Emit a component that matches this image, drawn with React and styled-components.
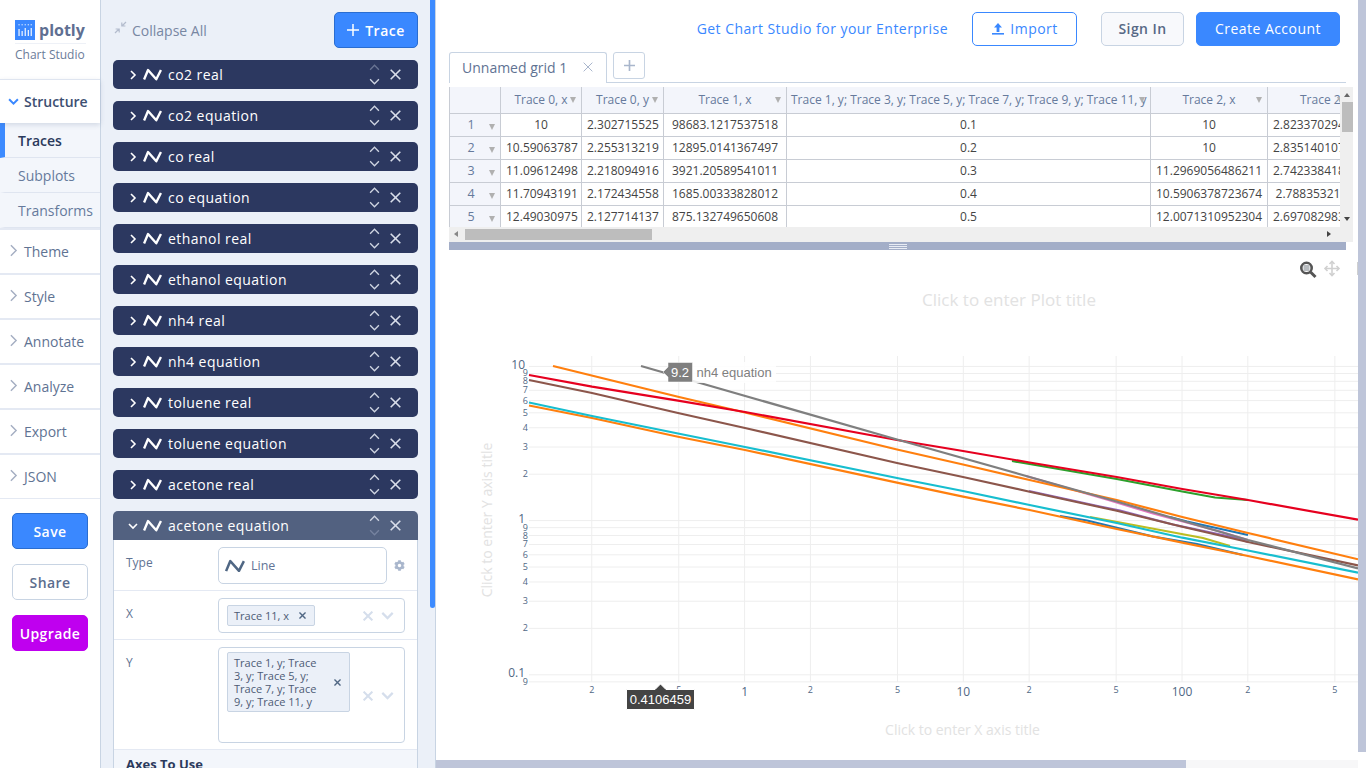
import React from 'react'
import styled, {createGlobalStyle} from 'styled-components'
import {FaCog} from 'react-icons/fa'

const GlobalStyle = createGlobalStyle`
  html, body { margin: 0; padding: 0; height: 100%; overflow: hidden; background: #fff; }
  body { font-family: "Open Sans", "Liberation Sans", sans-serif; color: #506784; }
  * { box-sizing: border-box; }
`

const Page = styled.div`
  display: flex;
  width: 1366px;
  height: 768px;
  overflow: hidden;
`

/* ---------- left nav ---------- */
const Nav = styled.nav`
  width: 101px;
  flex: none;
  background: #fff;
  border-right: 1px solid #c8d4e3;
  display: flex;
  flex-direction: column;
`
const Logo = styled.div`
  height: 79px;
  padding: 20px 14px 0 15px;
`
const LogoTop = styled.div`
  display: flex;
  align-items: center;
  gap: 4px;
  height: 24px;
  border-bottom: 1px solid #eef1f7;
  padding-bottom: 3px;
  font-size: 16px;
  font-weight: 700;
  color: #5f6f92;
`
const LogoSub = styled.div`
  font-size: 12px;
  color: #6b7c99;
  margin-top: 2px;
  white-space: nowrap;
`
const StructureRow = styled.div`
  height: 44px;
  border-top: 1px solid #dfe5f0;
  display: flex;
  align-items: center;
  padding-left: 8px;
  gap: 5px;
  font-size: 14px;
  font-weight: 600;
  color: #3d4f72;
  box-shadow: 0 2px 5px rgba(80, 100, 140, .2);
  position: relative;
  z-index: 1;
`
const SubItem = styled.div`
  height: 35px;
  background: #f3f6fb;
  border-bottom: 1px solid #dfe5f0;
  border-left: 5px solid ${p => (p.$active ? '#3d8bff' : 'transparent')};
  padding-left: 13px;
  display: flex;
  align-items: center;
  font-size: 14px;
  font-weight: ${p => (p.$active ? 600 : 400)};
  color: ${p => (p.$active ? '#2b3a5c' : '#667a9c')};
  white-space: nowrap;
  overflow: hidden;
`
const NavItem = styled.div`
  height: 45px;
  border-top: 2px solid #e4e9f3;
  padding-left: 7px;
  display: flex;
  align-items: center;
  gap: 4px;
  font-size: 14px;
  color: #5f7393;
`
const NavChevron = styled.span`
  display: flex;
  margin-bottom: 3px;
`
const NavEnd = styled.div`
  border-top: 1px solid #e4e9f3;
  padding: 14px 12px 0 12px;
  display: flex;
  flex-direction: column;
  gap: 15px;
`
const SideButton = styled.div`
  height: 36px;
  border-radius: 5px;
  display: flex;
  align-items: center;
  justify-content: center;
  font-size: 14px;
  font-weight: 600;
  letter-spacing: .4px;
  background: ${p => ({save: '#3a88ff', share: '#fff', upgrade: '#bf00ef'}[p.$kind])};
  color: ${p => (p.$kind === 'share' ? '#5b6d8e' : '#fff')};
  border: 1px solid ${p => ({save: '#2a6dd0', share: '#c8d4e3', upgrade: '#bf00ef'}[p.$kind])};
`

/* ---------- traces panel ---------- */
const Panel = styled.aside`
  width: 335px;
  flex: none;
  height: 768px;
  background: #ebf0f8;
  border-right: 1px solid #c8d4e3;
  padding: 12px 17px 0 12px;
  position: relative;
  overflow: hidden;
`
const PanelThumb = styled.div`
  position: absolute;
  top: -2px;
  right: 0;
  width: 5px;
  height: 610px;
  background: #3d8bff;
  border-radius: 3px;
`
const PanelHead = styled.div`
  display: flex;
  align-items: center;
  justify-content: space-between;
  height: 36px;
  margin-bottom: 12px;
`
const CollapseAll = styled.div`
  display: flex;
  align-items: center;
  gap: 5px;
  font-size: 14px;
  color: #7887a3;
  padding-left: 1px;
`
const CollapseSlot = styled.span`
  display: flex;
  margin-bottom: 6px;
`
const AddTrace = styled.div`
  width: 84px;
  height: 36px;
  border-radius: 5px;
  background: #3a88ff;
  border: 1px solid #2a6dd0;
  color: #fff;
  display: flex;
  align-items: center;
  justify-content: center;
  gap: 6px;
  font-size: 14px;
  font-weight: 600;
  letter-spacing: .5px;
`
const TraceRow = styled.div`
  height: 29px;
  margin-bottom: ${p => (p.$open ? 0 : '12px')};
  border-radius: ${p => (p.$open ? '5px 5px 0 0' : '5px')};
  background: ${p => (p.$open ? '#526180' : '#2c3860')};
  color: #fff;
  display: flex;
  align-items: center;
  gap: 5px;
  padding-left: 15px;
  font-size: 14px;
  font-weight: 500;
  letter-spacing: .45px;
`
const TraceName = styled.span`
  flex: 1;
  margin-left: 1px;
  white-space: nowrap;
`
const TraceTools = styled.div`
  display: flex;
  align-items: center;
  gap: 10px;
  padding-right: 17px;
`
const Stack = styled.div`
  display: flex;
  flex-direction: column;
  gap: 3px;
`
const Fold = styled.div`
  background: #fff;
  border: 1px solid #c8d4e3;
  border-top: none;
`
const FieldRow = styled.div`
  display: flex;
  border-bottom: 1px solid #e4e9f3;
  padding: 7px 12px 6px 12px;
`
const FieldLabel = styled.div`
  width: 92px;
  flex: none;
  font-size: 12px;
  color: #5f7393;
  padding-top: 7px;
`
const TypeBox = styled.div`
  width: 169px;
  flex: none;
  height: 37px;
  border: 1px solid #c8d4e3;
  border-radius: 5px;
  display: flex;
  align-items: center;
  gap: 6px;
  padding-left: 6px;
  font-size: 12.5px;
  color: #627496;
`
const GearSlot = styled.div`
  width: 18px;
  flex: none;
  display: flex;
  align-items: center;
  justify-content: flex-end;
  color: #a9b6cc;
  font-size: 11px;
`
const SelectBox = styled.div`
  width: 187px;
  flex: none;
  height: ${p => p.$h}px;
  border: 1px solid #c8d4e3;
  border-radius: 4px;
  padding: ${p => (p.$tall ? '4px 0 0 8px' : '0 0 0 8px')};
  display: flex;
  align-items: ${p => (p.$tall ? 'flex-start' : 'center')};
`
const Tag = styled.div`
  width: ${p => p.$w}px;
  display: flex;
  align-items: center;
  justify-content: space-between;
  background: #ebf0f8;
  border: 1px solid #c8d4e3;
  border-radius: 2px;
  padding: 3px 8px 3px 6px;
  font-size: 11px;
  line-height: 13px;
  color: #4d5b75;
  flex: none;
`
const TagText = styled.span`
  width: 92px;
`
const SelectTools = styled.div`
  margin-left: auto;
  display: flex;
  align-items: center;
  gap: 8px;
  padding-right: 10px;
  align-self: ${p => (p.$tall ? 'flex-start' : 'center')};
  margin-top: ${p => (p.$tall ? '37px' : 0)};
`
const SectionHead = styled.div`
  background: #f3f6fb;
  padding: 5px 12px 0;
  height: 40px;
  font-size: 13px;
  font-weight: 700;
  color: #2b3a5c;
`

/* ---------- main ---------- */
const Main = styled.main`
  position: relative;
  flex: 1;
  height: 768px;
  overflow: hidden;
  display: flex;
  flex-direction: column;
  background: #fff;
`
const TopBar = styled.header`
  height: 52px;
  flex: none;
  padding: 12px 26px 0 0;
  display: flex;
  align-items: flex-start;
  justify-content: flex-end;
`
const EnterpriseLink = styled.a`
  font-size: 14px;
  line-height: 34px;
  color: #3a88ff;
  letter-spacing: .46px;
  margin-right: 24px;
  white-space: nowrap;
`
const TopButton = styled.div`
  height: 34px;
  width: ${p => p.$w}px;
  margin-left: ${p => p.$ml}px;
  padding-bottom: 2px;
  border-radius: 5px;
  display: flex;
  align-items: center;
  justify-content: center;
  gap: 5px;
  font-size: 14px;
  letter-spacing: .45px;
  font-weight: ${p => (p.$kind === 'signin' ? 600 : 400)};
  background: ${p => ({import: '#fff', signin: '#f8f9fc', create: '#3a88ff'}[p.$kind])};
  color: ${p => ({import: '#3a88ff', signin: '#566885', create: '#fff'}[p.$kind])};
  border: 1px solid ${p => ({import: '#3a88ff', signin: '#c8d4e3', create: '#3a88ff'}[p.$kind])};
`
const TabRow = styled.div`
  margin-left: 13px;
  width: 897px;
  height: 31px;
  flex: none;
  border-bottom: 1px solid #c8d4e3;
  display: flex;
  gap: 6px;
  align-items: flex-start;
`
const GridTab = styled.div`
  width: 158px;
  height: 31px;
  background: #fff;
  border: 1px solid #c8d4e3;
  border-bottom: none;
  border-radius: 3px 3px 0 0;
  display: flex;
  align-items: center;
  justify-content: space-between;
  padding: 0 13px 2px 12px;
  font-size: 14px;
  color: #5f7393;
`
const AddTab = styled.div`
  width: 32px;
  height: 27px;
  border: 1px solid #c8d4e3;
  border-radius: 3px;
  display: flex;
  align-items: center;
  justify-content: center;
`
const GridBox = styled.div`
  margin: 4px 0 0 13px;
  width: 904px;
  height: 155px;
  flex: none;
  display: grid;
  grid-template-columns: 891px 13px;
  grid-template-rows: 140px 15px;
  background: #efefef;
`
const TableClip = styled.div`
  overflow: hidden;
  background: #fff;
`
const Table = styled.table`
  border-collapse: collapse;
  table-layout: fixed;
  width: 899px;
  font-size: 12px;
`
const Col = styled.col`
  width: ${p => p.$w}px;
`
const Th = styled.th`
  height: 26px;
  padding: 0 5px 0 ${p => p.$pl || 5}px;
  text-align: ${p => (p.$pl ? 'left' : 'center')};
  background: #f3f5fb;
  border: 1px solid #c8ccd4;
  border-top: none;
  color: #667a9c;
  font-weight: 400;
  white-space: nowrap;
  overflow: hidden;
  position: relative;
`
const SortMark = styled.span`
  position: absolute;
  right: 5px;
  top: ${p => p.$top}px;
  width: 0;
  height: 0;
  border-left: 3px solid transparent;
  border-right: 3px solid transparent;
  border-top: 6px solid #b0b0b0;
`
const RowHead = styled.td`
  height: 23px;
  padding: 0;
  background: #f3f5fb;
  border: 1px solid #c8ccd4;
  color: #667a9c;
  position: relative;
  font-size: 12.5px;
  text-align: left;
`
const RowNo = styled.span`
  display: inline-block;
  width: 42px;
  text-align: center;
`
const Td = styled.td`
  height: 23px;
  padding: 0 5px;
  border: 1px solid #c8ccd4;
  color: #444;
  text-align: center;
  white-space: nowrap;
  overflow: hidden;
`
const VTrack = styled.div`
  grid-row: 1 / 3;
  grid-column: 2;
  background: #efefef;
  position: relative;
`
const VThumb = styled.div`
  position: absolute;
  top: 15px;
  left: 2px;
  width: 11px;
  height: 30px;
  background: #bdbdbd;
`
const HTrack = styled.div`
  background: #efefef;
  position: relative;
`
const HThumb = styled.div`
  position: absolute;
  top: 2px;
  left: 16px;
  width: 187px;
  height: 11px;
  background: #bdbdbd;
`
const Arrow = styled.span`
  position: absolute;
  width: 0;
  height: 0;
  ${p => p.$css}
`
const Resizer = styled.div`
  margin-left: 13px;
  width: 897px;
  height: 8px;
  flex: none;
  background: #a3aec8;
  display: flex;
  flex-direction: column;
  align-items: center;
  justify-content: center;
  gap: 1px;
`
const Grip = styled.i`
  display: block;
  width: 18px;
  height: 1px;
  background: #e8ecf4;
`
const ChartWrap = styled.div`
  height: 510px;
  flex: none;
`
const ChartSvg = styled.svg`
  display: block;
  font-family: "Open Sans", sans-serif;
`
const RightBar = styled.div`
  position: absolute;
  top: 0;
  right: 0;
  width: 8px;
  height: 752px;
  background: #bec5d9;
`
const BottomTrack = styled.div`
  position: absolute;
  left: 0;
  bottom: 0;
  width: 922px;
  height: 8px;
  background: #f7f7f8;
`
const BottomThumb = styled.div`
  width: 750px;
  height: 8px;
  background: #bec5d9;
`

/* ---------- icons ---------- */
const LineIcon = ({color = '#fff', w = 19}) => (
  <svg width={w} height={w * 0.68} viewBox="0 0 19 13" fill="none">
    <path d="M1 11.6 L5 2 L13.3 11.4 L18 2" stroke={color} strokeWidth="2.4" strokeLinejoin="round" />
  </svg>
)
const Chevron = ({dir = 'right', color = '#fff', size = 10, sw = 1.6}) => {
  const d = {
    right: 'M3 1 L7 5 L3 9',
    down: 'M1 3 L5 7 L9 3',
    up: 'M1 7 L5 3 L9 7',
  }[dir]
  return (
    <svg width={size} height={size} viewBox="0 0 10 10" fill="none">
      <path d={d} stroke={color} strokeWidth={sw} />
    </svg>
  )
}
const Cross = ({color = '#d5dbe8', size = 11, sw = 1.5}) => (
  <svg width={size} height={size} viewBox="0 0 11 11" fill="none">
    <path d="M.7 .7 L10.3 10.3 M10.3 .7 L.7 10.3" stroke={color} strokeWidth={sw} />
  </svg>
)
const PlusIcon = ({color = '#fff', size = 12, sw = 1.5}) => (
  <svg width={size} height={size} viewBox="0 0 12 12" fill="none">
    <path d="M6 0 V12 M0 6 H12" stroke={color} strokeWidth={sw} />
  </svg>
)
const LogoMark = () => (
  <svg width="20" height="20" viewBox="0 0 20 20">
    <rect width="20" height="20" fill="#3a88ff" />
    <g fill="#e6f0ff">
      <rect x="3.4" y="9" width="1.3" height="7" />
      <rect x="6.5" y="11" width="1.3" height="5" />
      <rect x="9.6" y="8" width="1.3" height="8" />
      <rect x="12.7" y="10" width="1.3" height="6" />
      <rect x="15.6" y="8" width="1.3" height="8" />
    </g>
    <g fill="#b5d3ff">
      <rect x="3.4" y="4" width="1.3" height="1.4" />
      <rect x="6.5" y="4" width="1.3" height="1.4" />
      <rect x="9.6" y="4" width="1.3" height="1.4" />
      <rect x="12.7" y="4" width="1.3" height="1.4" />
      <rect x="15.6" y="4" width="1.3" height="1.4" />
    </g>
  </svg>
)
const CollapseIcon = () => (
  <svg width="13" height="13" viewBox="0 0 13 13" fill="none" stroke="#b3bccd" strokeWidth="1.2">
    <path d="M1 12 L5 8 M1.6 8 H5.2 V11.4" />
    <path d="M12 1 L8 5 M11.4 5 H7.8 V1.6" />
  </svg>
)
const UploadIcon = () => (
  <svg width="14" height="13" viewBox="0 0 14 13" fill="#3a88ff">
    <path d="M7 1 L11 5.5 H8.4 V10 H5.6 V5.5 H3 Z" />
    <rect x="1" y="11" width="12" height="1.6" />
  </svg>
)

/* ---------- chart ---------- */
const CX = v => 744.6 + 218.7 * Math.log10(v)
const CY = v => 520.6 - 154.2 * Math.log10(v)

const xTicks = [0.2, 0.5, 1, 2, 5, 10, 20, 50, 100, 200, 500]
const yTicks = [0.09, 0.1]
;[1, 0.1].forEach(m => {
  for (let k = 2; k <= 10; k++) {
    yTicks.push(+(k * m).toFixed(2))
  }
})

const majorY = {10: '10', 1: '1', 0.1: '0.1'}
const minorLabel = v => {
  const s = v >= 1 ? v : v < 0.1 ? v * 100 : v * 10
  return Math.round(s)
}
const toPath = pts => 'M' + pts.map(p => p.join(' ')).join(' L')
const series = [
  ['#2ca02c', [[1012, 461], [1029.6, 464], [1116.7, 479], [1182.3, 491.5], [1215, 497.5], [1248, 500]]],
  ['#e377c2', [[1026, 476], [1106.7, 499.5], [1153, 513.5], [1220, 531.5], [1248, 540]]],
  ['#9467bd', [[1029, 491], [1100, 506.5], [1120, 510.5], [1173, 524.5], [1237, 538], [1248, 542]]],
  ['#bcbd22', [[1090, 517], [1120, 522.5], [1203, 538], [1230, 546]]],
  ['#1f77b4', [[1060, 516], [1087, 520.5], [1153, 536.5], [1197, 544], [1243, 555]]],
  ['#1f77b4', [[1170, 517], [1187, 521.5], [1248, 535]]],
  ['#ff7f0e', [[553, 366], [678, 396.7], [745, 412.5], [897, 449.5], [963, 464.5], [1029.6, 480], [1116.7, 500], [1182.3, 517], [1248, 533], [1358, 559.3]]],
  ['#e6001f', [[529, 375], [592, 386.7], [678, 400.7], [745, 412], [897, 440], [963, 451], [1029.6, 462.5], [1116.7, 477], [1182.3, 489], [1248, 500], [1358, 519.7]]],
  ['#ff7f0e', [[529, 405.5], [592, 418], [678, 436.7], [745, 450], [897, 482.7], [963, 496.7], [1029.6, 510], [1116.7, 529], [1182.3, 542.7], [1248, 556], [1358, 579.3]]],
  ['#17becf', [[529, 402.5], [592, 416], [678, 433.5], [745, 447], [897, 478], [963, 491], [1029.6, 505], [1116.7, 523], [1182.3, 537.7], [1248, 550.5], [1358, 572.7]]],
  ['#8c564b', [[529, 380], [592, 393], [678, 413], [745, 428], [897, 463], [963, 477], [1029.6, 491.7], [1116.7, 510.7], [1182.3, 526.7], [1248, 542], [1358, 565.3]]],
  ['#7f7f7f', [[641, 366], [897, 439.5], [1029.6, 477], [1116.7, 501.5], [1248, 540], [1358, 568.5]]],
]

const Chart = () => (
  <ChartSvg width="922" height="510" viewBox="436 250 922 510">
    <g stroke="#eeeeee" strokeWidth="1">
      {xTicks.map(v => (
        <line key={v} x1={CX(v)} x2={CX(v)} y1="356" y2="682" />
      ))}
      {yTicks.map(v => (
        <line key={v} x1="529" x2="1358" y1={CY(v)} y2={CY(v)} />
      ))}
    </g>
    <g fill="#506784" textAnchor="end">
      {yTicks.map(v =>
        majorY[v] ? (
          <text key={v} x="525" y={CY(v) + 2.4} fontSize="12">{majorY[v]}</text>
        ) : (
          <text key={v} x="528" y={CY(v) + 3} fontSize="9">{minorLabel(v)}</text>
        )
      )}
    </g>
    <g fill="#506784" textAnchor="middle">
      {xTicks.map(v => {
        const major = v === 1 || v === 10 || v === 100
        const lab = major ? v : String(v).replace('0.', '').replace(/0+$/, '')
        return (
          <text key={v} x={CX(v)} y={major ? 696 : 693} fontSize={major ? 12 : 9}>{lab}</text>
        )
      })}
    </g>
    <g fill="none" strokeWidth="2.2">
      {series.map(([c, pts], i) => (
        <path key={i} d={toPath(pts)} stroke={c} />
      ))}
    </g>
    <text x="1009" y="306" textAnchor="middle" fontSize="17" fill="#e2e2e2">Click to enter Plot title</text>
    <text x="962.5" y="735" textAnchor="middle" fontSize="14" fill="#e2e2e2">Click to enter X axis title</text>
    <text transform="translate(492 520) rotate(-90)" textAnchor="middle" fontSize="14" fill="#e2e2e2">Click to enter Y axis title</text>

    <rect x="692" y="362" width="84" height="21" fill="#fff" fillOpacity=".85" />
    <path d="M668 362.5 H692.5 V382 H668 V377 L663 372 L668 367 Z" fill="#7f7f7f" stroke="#fff" strokeOpacity=".5" />
    <text x="680" y="377" textAnchor="middle" fontSize="13" fill="#fff" fontFamily='"Liberation Sans", sans-serif'>9.2</text>
    <text x="696.5" y="377" fontSize="13" fill="#7f7f7f" fontFamily='"Liberation Sans", sans-serif'>nh4 equation</text>

    <path d="M626.5 689.5 H655 L660.5 684 L666 689.5 H694.5 V709.5 H626.5 Z" fill="#444" stroke="#fff" />
    <text x="660.5" y="704" textAnchor="middle" fontSize="13" fill="#fff" fontFamily='"Liberation Sans", sans-serif'>0.4106459</text>

    <rect x="1303.5" y="265" width="6" height="6" fill="#b8bcc0" />
    <g fill="none" stroke="#555" strokeWidth="2.6">
      <circle cx="1306.5" cy="268" r="5.2" />
      <path d="M1310.5 272 L1315.5 277" strokeWidth="3" />
    </g>
    <g fill="none" stroke="#d0d0d0" strokeWidth="1.6">
      <path d="M1325 268.5 H1339 M1332 261.5 V275.5" />
      <path d="M1327.5 266 L1325 268.5 L1327.5 271 M1336.5 266 L1339 268.5 L1336.5 271 M1329.5 264 L1332 261.5 L1334.5 264 M1329.5 273 L1332 275.5 L1334.5 273" />
    </g>
    <rect x="1357" y="262" width="1" height="13" fill="#d0d0d0" />
  </ChartSvg>
)

/* ---------- data ---------- */
const traces = [
  'co2 real', 'co2 equation', 'co real', 'co equation', 'ethanol real', 'ethanol equation',
  'nh4 real', 'nh4 equation', 'toluene real', 'toluene equation', 'acetone real',
]
const columns = [
  {w: 51},
  {w: 81, t: 'Trace 0, x'},
  {w: 82, t: 'Trace 0, y'},
  {w: 123, t: 'Trace 1, x'},
  {w: 364, t: 'Trace 1, y; Trace 3, y; Trace 5, y; Trace 7, y; Trace 9, y; Trace 11, y', pl: 4},
  {w: 117, t: 'Trace 2, x'},
  {w: 81, t: 'Trace 2, y', pl: 32},
]
const rows = [
  ['10', '2.302715525', '98683.1217537518', '0.1', '10', '2.82337029412'],
  ['10.59063787', '2.255313219', '12895.0141367497', '0.2', '10', '2.83514010712'],
  ['11.09612498', '2.218094916', '3921.20589541011', '0.3', '11.2969056486211', '2.74233841812'],
  ['11.70943191', '2.172434558', '1685.00333828012', '0.4', '10.5906378723674', '2.78835321'],
  ['12.49030975', '2.127714137', '875.132749650608', '0.5', '12.0071310952304', '2.69708298312'],
]
const navItems = ['Theme', 'Style', 'Annotate', 'Analyze', 'Export', 'JSON']

const TraceHeader = ({name, open, first}) => (
  <TraceRow $open={open}>
    <Chevron dir={open ? 'down' : 'right'} />
    <LineIcon />
    <TraceName>{name}</TraceName>
    <TraceTools>
      <Stack>
        <Chevron dir="up" size={11} sw={1.2} color={first ? '#6a7594' : '#cfd5e2'} />
        <Chevron dir="down" size={11} sw={1.2} color={open ? '#76839f' : '#cfd5e2'} />
      </Stack>
      <Cross size={11} sw={1.6} color="#d9deea" />
    </TraceTools>
  </TraceRow>
)

const SelectActions = ({tall}) => (
  <SelectTools $tall={tall}>
    <Cross size={10} sw={2.2} color="#d5deec" />
    <Chevron dir="down" size={13} sw={1.7} color="#d5deec" />
  </SelectTools>
)

const App = () => (
  <Page>
    <GlobalStyle />
    <Nav>
      <Logo>
        <LogoTop><LogoMark />plotly</LogoTop>
        <LogoSub>Chart Studio</LogoSub>
      </Logo>
      <StructureRow><Chevron dir="down" color="#3a88ff" size={11} sw={1.8} />Structure</StructureRow>
      <SubItem $active>Traces</SubItem>
      <SubItem>Subplots</SubItem>
      <SubItem>Transforms</SubItem>
      {navItems.map(n => (
        <NavItem key={n}>
          <NavChevron><Chevron color="#a4aec2" size={13} sw={1.1} /></NavChevron>
          {n}
        </NavItem>
      ))}
      <NavEnd>
        <SideButton $kind="save">Save</SideButton>
        <SideButton $kind="share">Share</SideButton>
        <SideButton $kind="upgrade">Upgrade</SideButton>
      </NavEnd>
    </Nav>

    <Panel>
      <PanelThumb />
      <PanelHead>
        <CollapseAll><CollapseSlot><CollapseIcon /></CollapseSlot>Collapse All</CollapseAll>
        <AddTrace><PlusIcon />Trace</AddTrace>
      </PanelHead>
      {traces.map((t, i) => (
        <TraceHeader key={t} name={t} first={i === 0} />
      ))}
      <TraceHeader name="acetone equation" open />
      <Fold>
        <FieldRow>
          <FieldLabel>Type</FieldLabel>
          <TypeBox><LineIcon color="#506784" w={20} />Line</TypeBox>
          <GearSlot><FaCog /></GearSlot>
        </FieldRow>
        <FieldRow>
          <FieldLabel>X</FieldLabel>
          <SelectBox $h={35}>
            <Tag $w={88}>Trace 11, x<Cross size={7} sw={2.2} color="#506784" /></Tag>
            <SelectActions />
          </SelectBox>
        </FieldRow>
        <FieldRow>
          <FieldLabel>Y</FieldLabel>
          <SelectBox $h={96} $tall>
            <Tag $w={123}>
              <TagText>Trace 1, y; Trace 3, y; Trace 5, y; Trace 7, y; Trace 9, y; Trace 11, y</TagText>
              <Cross size={7} sw={2.2} color="#506784" />
            </Tag>
            <SelectActions tall />
          </SelectBox>
        </FieldRow>
        <SectionHead>Axes To Use</SectionHead>
      </Fold>
    </Panel>

    <Main>
      <TopBar>
        <EnterpriseLink>Get Chart Studio for your Enterprise</EnterpriseLink>
        <TopButton $kind="import" $w={105} $ml={0}><UploadIcon />Import</TopButton>
        <TopButton $kind="signin" $w={83} $ml={24}>Sign In</TopButton>
        <TopButton $kind="create" $w={144} $ml={12}>Create Account</TopButton>
      </TopBar>
      <TabRow>
        <GridTab>Unnamed grid 1<Cross size={10} sw={1.1} color="#a9b6cc" /></GridTab>
        <AddTab><PlusIcon size={11} sw={1.8} color="#a9b6cc" /></AddTab>
      </TabRow>
      <GridBox>
        <TableClip>
          <Table>
            <colgroup>
              {columns.map((c, i) => <Col key={i} $w={c.w} />)}
            </colgroup>
            <thead>
              <tr>
                {columns.map((c, i) => (
                  <Th key={i} $pl={c.pl}>
                    {c.t}{c.t && <SortMark $top={10} />}
                  </Th>
                ))}
              </tr>
            </thead>
            <tbody>
              {rows.map((r, i) => (
                <tr key={i}>
                  <RowHead><RowNo>{i + 1}</RowNo><SortMark $top={10} /></RowHead>
                  {r.map((v, j) => <Td key={j}>{v}</Td>)}
                </tr>
              ))}
            </tbody>
          </Table>
        </TableClip>
        <VTrack>
          <Arrow $css="top: 6px; left: 4px; border-left: 3.5px solid transparent; border-right: 3.5px solid transparent; border-bottom: 4px solid #666;" />
          <VThumb />
          <Arrow $css="top: 130px; left: 4px; border-left: 3.5px solid transparent; border-right: 3.5px solid transparent; border-top: 4px solid #444;" />
        </VTrack>
        <HTrack>
          <Arrow $css="top: 4px; left: 5px; border-top: 3.5px solid transparent; border-bottom: 3.5px solid transparent; border-right: 4px solid #888;" />
          <HThumb />
          <Arrow $css="top: 4px; right: 9px; border-top: 3.5px solid transparent; border-bottom: 3.5px solid transparent; border-left: 4px solid #444;" />
        </HTrack>
      </GridBox>
      <Resizer><Grip /><Grip /><Grip /></Resizer>
      <ChartWrap><Chart /></ChartWrap>
      <RightBar />
      <BottomTrack><BottomThumb /></BottomTrack>
    </Main>
  </Page>
)

export default App
